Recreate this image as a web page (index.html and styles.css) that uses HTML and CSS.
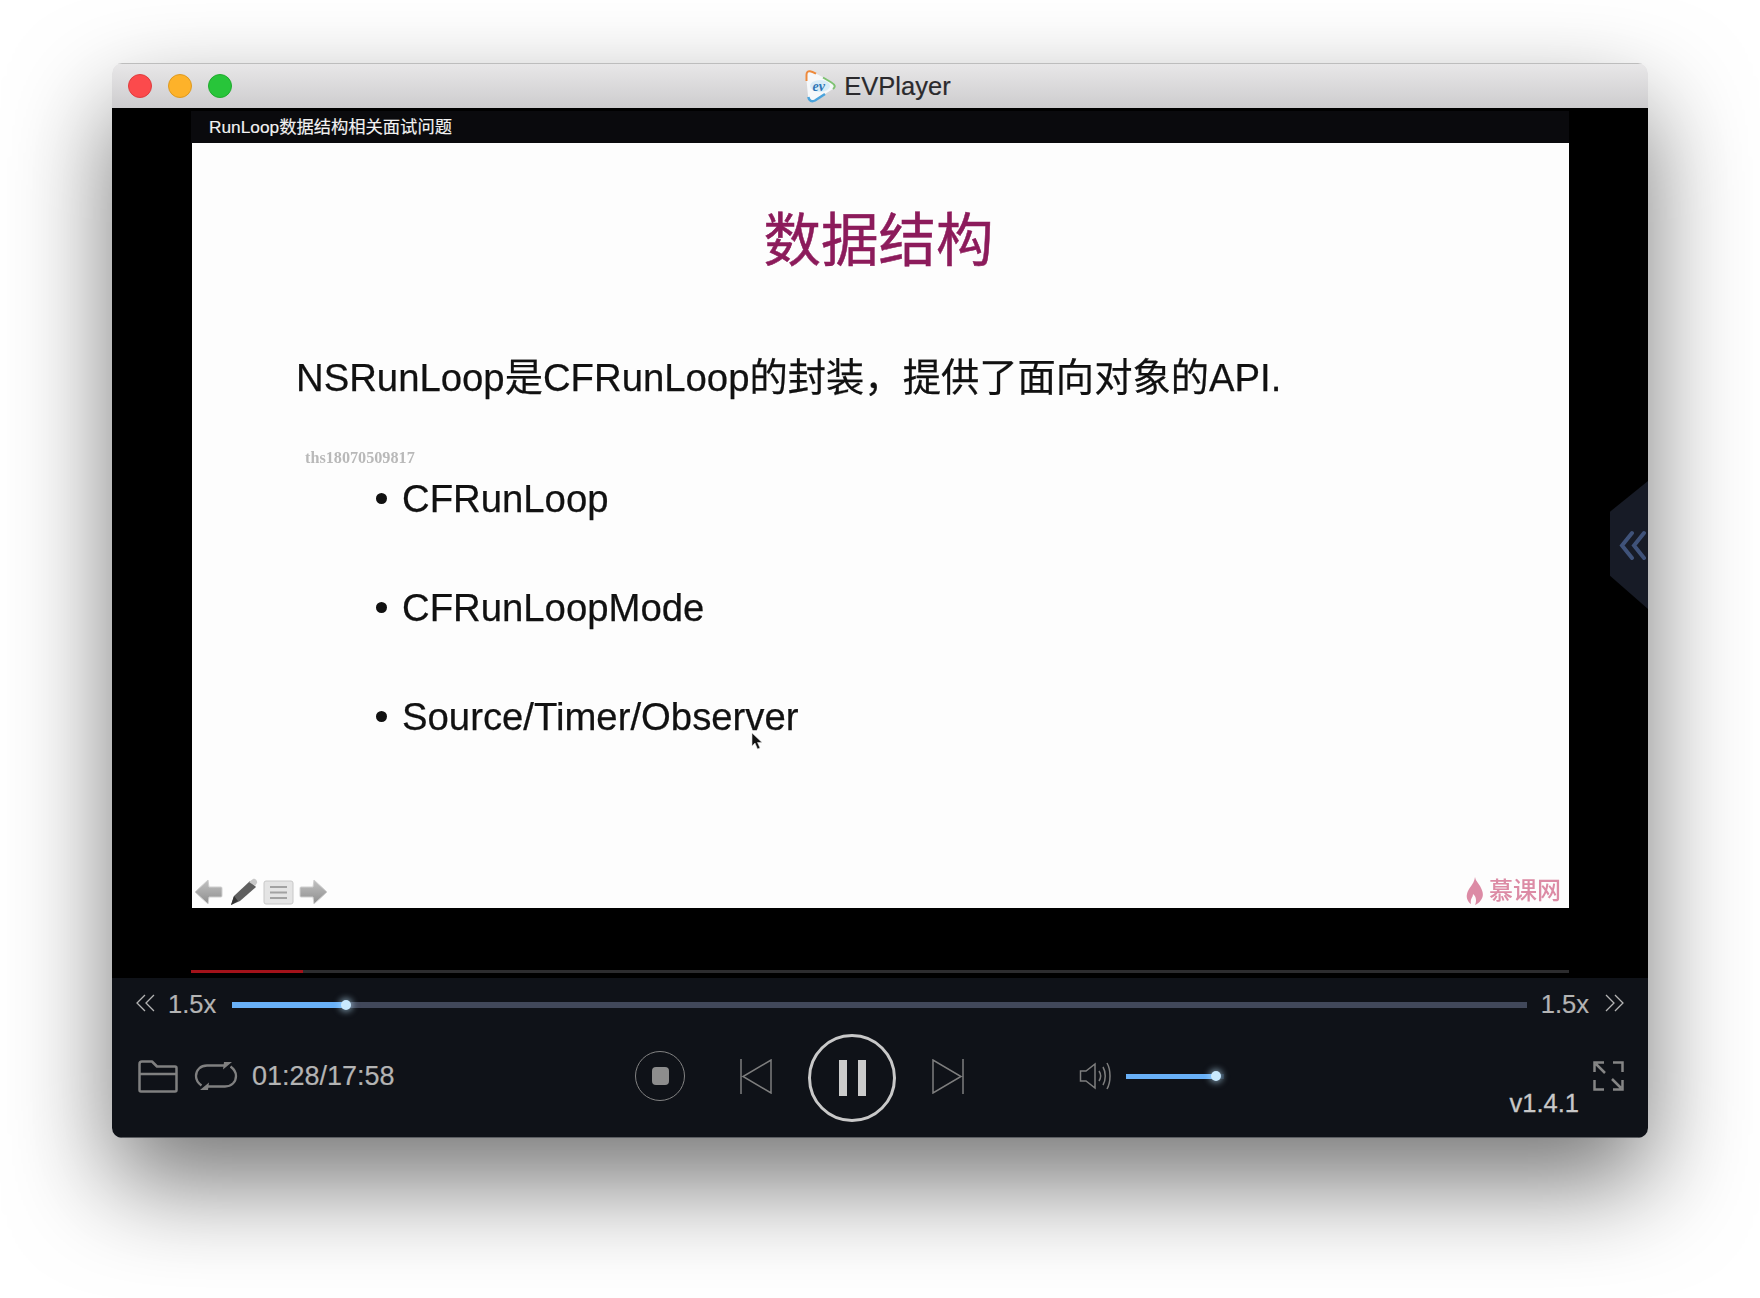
FILE: index.html
```html
<!DOCTYPE html>
<html lang="zh-CN">
<head>
    <meta charset="UTF-8">
    <meta name="viewport" content="width=device-width, initial-scale=1.0">
    <title>EVPlayer</title>
    <link rel="stylesheet" href="styles.css">
</head>
<body>
    <div class="window">
        <div class="titlebar">
            <div class="lights">
                <span class="light light-red"></span>
                <span class="light light-yellow"></span>
                <span class="light light-green"></span>
            </div>
            <div class="app-name">
                <svg class="app-logo" width="31" height="34" viewBox="0 0 31 34">
                    <path d="M4 2C2 2 1 3.500 1 6L3 27C3.500 32 7 33 10 31.500L27 20.500C31 18 31 15 27 13L8 3C6.500 2 5 2 4 2Z" fill="#f6f8fa"/>
                    <path d="M1.500 12L1.500 6C1.500 3 3 2 5 2.200C7 2.400 9 3.500 11 4.600" fill="none" stroke="#ee8a3c" stroke-width="2"/>
                    <path d="M18 8.500L26.500 13.500C30.500 16 30.500 18 28 20" fill="none" stroke="#7fc272" stroke-width="2"/>
                    <path d="M20 25L10 31.500C7 33 4 32 3.300 28" fill="none" stroke="#4aa3dc" stroke-width="2.500"/>
                    <ellipse cx="15" cy="17" rx="10" ry="6" fill="#d8ecf7"/>
                    <text class="logo-text" x="7.500" y="22">ev</text>
                </svg>
                <span>EVPlayer</span>
            </div>
        </div>

        <div class="video">
            <div class="stage">
                <div class="lesson-title">RunLoop数据结构相关面试问题</div>
                <div class="slide">
                    <h1 class="slide-title">数据结构</h1>
                    <p class="slide-lead">NSRunLoop是CFRunLoop的封装<span class="wide-comma">，</span>提供了面向对象的API.</p>
                    <div class="watermark">ths18070509817</div>
                    <ul class="slide-list">
                        <li>CFRunLoop</li>
                        <li>CFRunLoopMode</li>
                        <li>Source/Timer/Observer</li>
                    </ul>
                    <div class="slide-foot">
                        <div class="slide-tools">
                            <svg width="29" height="26" viewBox="0 0 29 26"><defs><linearGradient id="toolGrey" x1="0" y1="0" x2="0" y2="1"><stop offset="0" stop-color="#c2c2c2"/><stop offset="1" stop-color="#8e8e8e"/></linearGradient></defs><path d="M14 1L1 13L14 25L15 18L27 18C28 18 28 17 28 16L28 10C28 9 28 8 27 8L15 8Z" fill="url(#toolGrey)" stroke="#cfcfcf"/></svg>
                            <svg class="tool-pen" width="30" height="28" viewBox="0 0 30 28"><path d="M2 27L5 18L21 3L27 9L11 23Z" fill="#5f5f5f"/><path d="M20 4L24 1C26 0 29 3 28 5L26 8Z" fill="#c9c9c9"/><path d="M2 27L5 18L9 23Z" fill="#333"/></svg>
                            <svg class="tool-list" width="31" height="25" viewBox="0 0 31 25"><rect x="1" y="1" width="29" height="23" rx="2" fill="#e4e4e4" stroke="#c8c8c8"/><path d="M7 7H24M7 12.500H24M7 18H24" stroke="#a2a2a2" stroke-width="2"/></svg>
                            <svg width="29" height="26" viewBox="0 0 29 26"><path d="M15 1L28 13L15 25L14 18L2 18C1 18 1 17 1 16L1 10C1 9 1 8 2 8L14 8Z" fill="url(#toolGrey)" stroke="#cfcfcf"/></svg>
                        </div>
                        <div class="slide-brand">
                            <svg width="18" height="28" viewBox="0 0 18 28"><path d="M9 0C10 5 13 6 15 11C17 15 18 19 15 23C13 26 11 27 9 28C11 24 10 19 7 17C7 21 4 21 5 27C2 25 0 21 1 17C2 11 8 8 9 0Z" fill="#dc8ba5"/></svg>
                            <span>慕课网</span>
                        </div>
                    </div>
                    <svg class="cursor" width="12" height="19" viewBox="0 0 12 19"><path d="M1 1L1 14L4 11L6.500 17L9 16L6.500 10.500L11 10.500Z" fill="#111" stroke="#ddd" stroke-width="0.600"/></svg>
                </div>
                <div class="timeline"><div class="timeline-done"></div></div>
            </div>
            <div class="side-tab">
                <svg width="27" height="31" viewBox="0 0 27 31"><path d="M13 3L3 15.500L13 28M25 3L15 15.500L25 28" fill="none" stroke="#3f5279" stroke-width="4" stroke-linecap="round"/></svg>
            </div>
        </div>

        <div class="controls">
            <div class="speed-row">
                <svg class="chevrons" width="19" height="18" viewBox="0 0 19 18"><path d="M9 1L1 9L9 17M18 1L10 9L18 17" fill="none" stroke="#b4b4b4" stroke-width="1.300"/></svg>
                <span class="speed">1.5x</span>
                <div class="slider speed-slider">
                    <div class="slider-fill"></div>
                    <span class="slider-thumb"></span>
                </div>
                <span class="speed">1.5x</span>
                <svg class="chevrons" width="19" height="18" viewBox="0 0 19 18"><path d="M1 1L9 9L1 17M10 1L18 9L10 17" fill="none" stroke="#b4b4b4" stroke-width="1.300"/></svg>
            </div>
            <div class="button-row">
                <svg class="folder" width="40" height="33" viewBox="0 0 40 33"><path d="M1.500 4C1.500 2.500 2.500 1.500 4 1.500H14L19 6.500H37C38 6.500 38.500 7 38.500 8V30C38.500 31 38 31.500 37 31.500H3C2 31.500 1.500 31 1.500 30ZM1.500 14H38.500" fill="none" stroke="#808080" stroke-width="2.500" stroke-linejoin="round"/></svg>
                <svg class="loop" width="44" height="30" viewBox="0 0 44 30"><path d="M31 4.500H13C6.500 4.500 2 9 2 15C2 19 4 22 7.500 24.500M13 25.500H31C37.500 25.500 42 21 42 15C42 11 40 8 36.500 5.500" fill="none" stroke="#808080" stroke-width="2.300"/><path d="M29 8.500L38 1H30ZM15 21.500L6 29H14Z" fill="#808080"/></svg>
                <span class="clock">01:28/17:58</span>
                <button class="stop"><span class="stop-square"></span></button>
                <svg class="prev" width="32" height="35" viewBox="0 0 32 35"><path d="M1 0V35M31 1V34L3 17.500Z" fill="none" stroke="#7e7e7e" stroke-width="1.500"/></svg>
                <button class="pause"><span class="pause-bar"></span><span class="pause-bar"></span></button>
                <svg class="next" width="32" height="35" viewBox="0 0 32 35"><path d="M31 0V35M1 1V34L29 17.500Z" fill="none" stroke="#7e7e7e" stroke-width="1.500"/></svg>
                <svg class="volume" width="33" height="30" viewBox="0 0 33 30"><path d="M1.500 10H7L16 3V27L7 20H1.500Z" fill="none" stroke="#7e7e7e" stroke-width="1.500"/><path d="M20 10C22 13 22 17 20 20M24 6C27 11 27 19 24 24M28 2C32 9 32 21 28 28" fill="none" stroke="#7e7e7e" stroke-width="1.500"/></svg>
                <div class="slider volume-slider">
                    <div class="slider-fill"></div>
                    <span class="slider-thumb"></span>
                </div>
                <span class="version">v1.4.1</span>
                <svg class="fullscreen" width="31" height="30" viewBox="0 0 31 30"><path d="M1.500 11V1.500H11M20 1.500H29.500V11M1.500 19V28.500H11M20 28.500H29.500V19M3 3L12 12M28 27L19 18" fill="none" stroke="#858585" stroke-width="2.500"/></svg>
            </div>
        </div>
    </div>
</body>
</html>
```

FILE: styles.css
```css
html, body {
    margin: 0;
    padding: 0;
}

body {
    width: 1760px;
    height: 1298px;
    background-color: #fff;
    font-family: "Liberation Sans", "Noto Sans CJK SC", sans-serif;
    overflow: hidden;
    padding-top: 63px;
    padding-left: 112px;
    box-sizing: border-box;
}

.window {
    width: 1536px;
    height: 1075px;
    display: flex;
    flex-direction: column;
    border-radius: 10px;
    overflow: hidden;
    box-shadow: 0 45px 100px rgba(0, 0, 0, 0.54);
}

/* barra de titulo */
.titlebar {
    height: 45px;
    flex: none;
    display: grid;
    grid-template-columns: 1fr auto 1fr;
    align-items: center;
    padding-right: 4px;
    box-sizing: border-box;
    background: linear-gradient(#e8e7e8, #cdccce);
    border-top: 1px solid #bdbdbd;
}

.lights {
    display: flex;
    gap: 16px;
    padding-left: 16px;
}

.light {
    width: 24px;
    height: 24px;
    border-radius: 50%;
    box-sizing: border-box;
}

.light-red { background-color: #fc4a4c; border: 1px solid #df3d3f; }
.light-yellow { background-color: #fdb22a; border: 1px solid #de9a20; }
.light-green { background-color: #28c53a; border: 1px solid #20ab2e; }

.app-name {
    display: flex;
    align-items: center;
    gap: 8px;
    font-size: 25.500px;
    color: #2b2a2d;
    -webkit-text-stroke: 0.2px #2b2a2d;
}

.logo-text {
    font-family: "Liberation Serif", serif;
    font-style: italic;
    font-weight: bold;
    font-size: 14px;
    fill: #2f75b5;
    -webkit-text-stroke: 0;
}

/* area do video */
.video {
    flex: 1;
    position: relative;
    background-color: #000;
    padding: 3px 79px 0;
}

.stage {
    height: 100%;
    display: flex;
    flex-direction: column;
}

.lesson-title {
    height: 32px;
    flex: none;
    background-color: #0a0a0d;
    color: #f2f2f2;
    font-size: 17.300px;
    line-height: 32px;
    padding-left: 18px;
    -webkit-text-stroke: 0.15px #f2f2f2;
}

.slide {
    height: 765px;
    flex: none;
    margin-left: 1px;
    position: relative;
    display: flex;
    flex-direction: column;
    box-sizing: border-box;
    background-color: #fdfdfd;
    color: #111;
}

.slide-title {
    margin: 56px 4px 0 0;
    text-align: center;
    font-size: 57.500px;
    line-height: 84px;
    font-weight: 400;
    color: #8c1b5b;
    -webkit-text-stroke: 0.5px #8c1b5b;
    filter: blur(0.4px);
}

.slide-lead {
    margin: 64px 0 0 104px;
    font-size: 38.300px;
    line-height: 56px;
    white-space: nowrap;
    -webkit-text-stroke: 0.25px #111;
    filter: blur(0.3px);
}

.wide-comma {
    font-family: "Noto Sans CJK TC", sans-serif;
}

.watermark {
    margin: 43px 0 0 113px;
    font-family: "Liberation Serif", serif;
    font-weight: bold;
    font-size: 16.200px;
    line-height: 18px;
    color: #b9b9b9;
    filter: blur(0.7px);
}

.slide-list {
    list-style: none;
    margin: 4px 0 0 190px;
    padding: 0;
    font-size: 38.300px;
    line-height: 56px;
    -webkit-text-stroke: 0.25px #111;
    filter: blur(0.3px);
}

.slide-list li {
    position: relative;
    height: 56px;
    margin-bottom: 53px;
    padding-left: 20px;
}

.slide-list li::before {
    content: "";
    position: absolute;
    left: -6px;
    top: 22px;
    width: 11px;
    height: 11px;
    border-radius: 50%;
    background-color: #111;
}

.slide-foot {
    margin-top: auto;
    padding: 0 8px 2px 2px;
    display: flex;
    justify-content: space-between;
    align-items: flex-end;
}

.slide-tools {
    display: flex;
    align-items: center;
    gap: 5px;
    filter: blur(0.4px);
}

.tool-pen { margin-left: 1px; }
.tool-list { margin-left: -1px; }

.slide-brand {
    display: flex;
    align-items: center;
    gap: 5px;
    color: #dc8ba5;
    font-size: 24px;
    line-height: 30px;
    font-weight: 500;
    filter: blur(0.4px);
}

.cursor {
    position: absolute;
    left: 559px;
    top: 589px;
}

.timeline {
    margin-top: 62px;
    height: 3px;
    background-color: #2c2c2e;
}

.timeline-done {
    width: 112px;
    height: 3px;
    background-color: #a3121a;
}

.side-tab {
    position: absolute;
    right: 0;
    top: 373px;
    width: 38px;
    height: 128px;
    display: flex;
    align-items: center;
    justify-content: flex-end;
    padding-right: 2px;
    box-sizing: border-box;
    background-color: #171b26;
    clip-path: polygon(100% 0, 100% 100%, 0 74%, 0 24%);
}

/* controles */
.controls {
    height: 160px;
    flex: none;
    box-sizing: border-box;
    background-color: #0f1218;
    border-bottom: 1px solid #5c5e62;
}

.speed-row {
    height: 53px;
    display: flex;
    align-items: center;
    padding: 0 24px;
    color: #b4b4b4;
    font-size: 25.500px;
    -webkit-text-stroke: 0.2px #b4b4b4;
}

.speed-row .chevrons {
    margin-top: -4px;
}

.speed-row .speed:nth-child(2) {
    margin-left: 13px;
}

.speed-slider {
    width: 1297px;
    margin: 0 14px 0 16px;
}

.speed-row .chevrons:last-child {
    margin-left: 16px;
}

.slider {
    position: relative;
    height: 6px;
    background-color: #41485a;
}

.slider-fill {
    height: 100%;
    background-color: #69b1f8;
}

.slider-thumb {
    position: absolute;
    top: -2px;
    width: 10px;
    height: 10px;
    border-radius: 50%;
    background-color: #c9eaff;
    box-shadow: 0 0 6px 2px rgba(190, 230, 255, 0.55);
}

.speed-slider .slider-fill { width: 114px; }
.speed-slider .slider-thumb { left: 109px; }

.button-row {
    height: 90px;
    display: flex;
    align-items: center;
    padding: 0 24px 0 26px;
}

.loop { margin-left: 16px; }

.clock {
    margin-left: 14px;
    width: 142px;
    white-space: nowrap;
    color: #b4b4b4;
    font-size: 27px;
    -webkit-text-stroke: 0.2px #b4b4b4;
}

button {
    padding: 0;
    background: none;
    cursor: pointer;
}

.stop {
    width: 50px;
    height: 50px;
    margin-left: 241px;
    border: 1.500px solid #828282;
    border-radius: 50%;
    display: flex;
    align-items: center;
    justify-content: center;
}

.stop-square {
    width: 17px;
    height: 18px;
    border-radius: 4px;
    background-color: #8d8d8d;
}

.prev { margin-left: 55px; }

.pause {
    width: 88px;
    height: 88px;
    margin: 4px 0 0 36px;
    border: 3px solid #c8c8c8;
    border-radius: 50%;
    display: flex;
    align-items: center;
    justify-content: center;
    gap: 11px;
}

.pause-bar {
    width: 8px;
    height: 36px;
    background-color: #cbcbcb;
}

.next { margin-left: 36px; }
.volume { margin-left: 115px; }

.volume-slider {
    width: 98px;
    height: 5px;
    margin-left: 14px;
    background-color: #1c2a3a;
}

.volume-slider .slider-fill { width: 90px; }
.volume-slider .slider-thumb { left: 85px; top: -3px; }

.version {
    margin: 54px 0 0 auto;
    color: #c8c8c8;
    font-size: 25.500px;
    -webkit-text-stroke: 0.3px #c8c8c8;
}

.fullscreen { margin-left: 14px; }
```
